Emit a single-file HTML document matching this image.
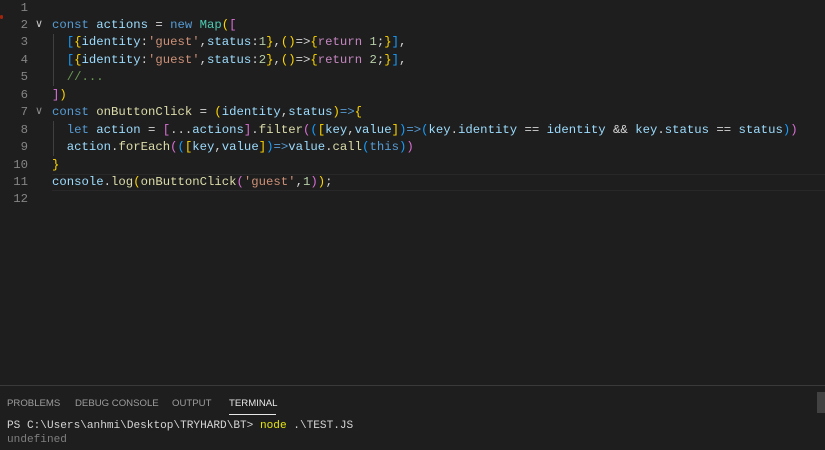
<!DOCTYPE html>
<html><head><style>
body{margin:0;width:825px;height:450px;background:#1e1e1e;overflow:hidden;font-family:"Liberation Mono",monospace;font-size:12.3px;color:#d4d4d4;position:relative}
.ln{position:absolute;left:0;width:28px;text-align:right;color:#858585}
.cd{position:absolute;left:52px;white-space:pre}
.k{color:#569cd6}.v{color:#9cdcfe}.f{color:#dcdcaa}.c{color:#4ec9b0}.s{color:#ce9178}.n{color:#b5cea8}.r{color:#c586c0}.cm{color:#6a9955}
.g{color:#ffd700}.p{color:#da70d6}.b{color:#179fff}
.fold{position:absolute;left:35px;color:#c5c5c5;font-family:"DejaVu Sans",sans-serif;font-size:11px}
.guide{position:absolute;left:53px;width:1px;background:#404040}
.tab{position:absolute;top:398px;font-family:"Liberation Sans",sans-serif;font-size:9.6px;color:#9d9d9d}
.term{position:absolute;left:7px;white-space:pre;font-size:11.1px}
</style></head><body>
<div style="position:absolute;left:0;top:15px;width:3px;height:4px;background:#a1260d;border-radius:2px"></div>
<div style="position:absolute;left:52px;right:0;top:174px;height:15px;border-top:1px solid #282828;border-bottom:1px solid #282828"></div>
<div class="guide" style="top:34px;height:52px"></div>
<div class="guide" style="top:121px;height:35px"></div>
<script>
var L=[
'',
'<span class="k">const</span> <span class="v">actions</span> = <span class="k">new</span> <span class="c">Map</span><span class="g">(</span><span class="p">[</span>',
'  <span class="b">[</span><span class="g">{</span><span class="v">identity</span>:<span class="s">\'guest\'</span>,<span class="v">status</span>:<span class="n">1</span><span class="g">}</span>,<span class="g">()</span>=&gt;<span class="g">{</span><span class="r">return</span> <span class="n">1</span>;<span class="g">}</span><span class="b">]</span>,',
'  <span class="b">[</span><span class="g">{</span><span class="v">identity</span>:<span class="s">\'guest\'</span>,<span class="v">status</span>:<span class="n">2</span><span class="g">}</span>,<span class="g">()</span>=&gt;<span class="g">{</span><span class="r">return</span> <span class="n">2</span>;<span class="g">}</span><span class="b">]</span>,',
'  <span class="cm">//...</span>',
'<span class="p">]</span><span class="g">)</span>',
'<span class="k">const</span> <span class="f">onButtonClick</span> = <span class="g">(</span><span class="v">identity</span>,<span class="v">status</span><span class="g">)</span><span class="k">=&gt;</span><span class="g">{</span>',
'  <span class="k">let</span> <span class="v">action</span> = <span class="p">[</span>...<span class="v">actions</span><span class="p">]</span>.<span class="f">filter</span><span class="p">(</span><span class="b">(</span><span class="g">[</span><span class="v">key</span>,<span class="v">value</span><span class="g">]</span><span class="b">)</span><span class="k">=&gt;</span><span class="b">(</span><span class="v">key</span>.<span class="v">identity</span> == <span class="v">identity</span> &amp;&amp; <span class="v">key</span>.<span class="v">status</span> == <span class="v">status</span><span class="b">)</span><span class="p">)</span>',
'  <span class="v">action</span>.<span class="f">forEach</span><span class="p">(</span><span class="b">(</span><span class="g">[</span><span class="v">key</span>,<span class="v">value</span><span class="g">]</span><span class="b">)</span><span class="k">=&gt;</span><span class="v">value</span>.<span class="f">call</span><span class="b">(</span><span class="k">this</span><span class="b">)</span><span class="p">)</span>',
'<span class="g">}</span>',
'<span class="v">console</span>.<span class="f">log</span><span class="g">(</span><span class="f">onButtonClick</span><span class="p">(</span><span class="s">\'guest\'</span>,<span class="n">1</span><span class="p">)</span><span class="g">)</span>;',
''];
for(var i=0;i<12;i++){var t=0.5+i*17.45;
document.write('<div class="ln" style="top:'+t+'px">'+(i+1)+'</div><div class="cd" style="top:'+t+'px">'+L[i]+'</div>');}
</script>
<div class="fold" style="top:17px">&#8744;</div>
<div class="fold" style="top:104px;color:#8a8a8a">&#8744;</div>
<div style="position:absolute;left:0;right:0;top:385px;height:1px;background:#3a3a3a"></div>
<div class="tab" style="left:7px">PROBLEMS</div>
<div class="tab" style="left:75px">DEBUG CONSOLE</div>
<div class="tab" style="left:172px">OUTPUT</div>
<div class="tab" style="left:229px;color:#e7e7e7">TERMINAL</div>
<div style="position:absolute;left:229px;top:414px;width:47px;height:1px;background:#e7e7e7"></div>
<div style="position:absolute;left:817px;top:392px;width:8px;height:21px;background:#424242"></div>
<div class="term" style="top:420px">PS C:\Users\anhmi\Desktop\TRYHARD\BT&gt; <span style="color:#e5e510">node</span> .\TEST.JS</div>
<div class="term" style="top:434px;color:#7f7f7f">undefined</div>
</body></html>
